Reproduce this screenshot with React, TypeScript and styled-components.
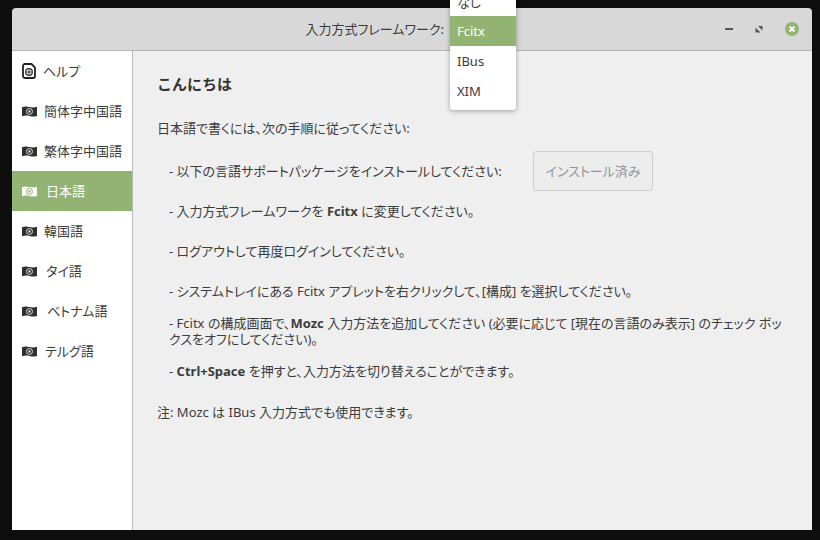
import React from "react";
import styled, { createGlobalStyle } from "styled-components";

const Global = createGlobalStyle`
  html, body { margin: 0; padding: 0; width: 820px; height: 540px; overflow: hidden; background: #0e0e0e; }
  #root { width: 820px; height: 540px; }
`;

const Desktop = styled.div`
  width: 820px;
  height: 540px;
  padding: 8px 8px 10px 12px;
  box-sizing: border-box;
  background: #0e0e0e;
  font-family: "Noto Sans", "Noto Sans CJK JP", sans-serif;
  font-feature-settings: "palt";
  font-size: 13px;
  color: #3c3c3c;
`;

const Win = styled.div`
  position: relative;
  width: 100%;
  height: 100%;
  display: flex;
  flex-direction: column;
`;

const TitleBar = styled.header`
  height: 42px;
  flex: none;
  display: flex;
  align-items: center;
  background: #d8d8d8;
  border-bottom: 1px solid #b6b6b6;
  border-radius: 4px 4px 0 0;
`;

const TitleText = styled.div`
  width: 432px;
  flex: none;
  margin-bottom: 2px;
  text-align: right;
  font-size: 13px;
  color: #3a3a3a;
`;

const WindowButtons = styled.div`
  margin-left: auto;
  display: flex;
  align-items: center;
  gap: 22px;
  padding-right: 13px;
`;

const Body = styled.div`
  flex: 1;
  display: flex;
  min-height: 0;
`;

const Sidebar = styled.nav`
  width: 120px;
  flex: none;
  background: #fff;
  border-right: 1px solid #b9b9b9;
`;

const Item = styled.div<{ $active?: boolean }>`
  height: 40px;
  display: flex;
  align-items: center;
  padding-left: 10px;
  background: ${(p) => (p.$active ? "#92b372" : "transparent")};
  color: ${(p) => (p.$active ? "#fff" : "#3c3c3c")};
  svg { flex: none; }
`;

const ItemLabel = styled.span<{ $pad: number }>`
  margin: 0 0 2px ${(p) => p.$pad}px;
`;

const Main = styled.main`
  flex: 1;
  background: #efefef;
  padding: 22px 20px 0 24px;
  min-width: 0;
`;

const Heading = styled.h1`
  margin: 0 0 25px;
  font-size: 15px;
  font-weight: 700;
  font-feature-settings: normal;
  line-height: 22px;
  color: #333;
`;

const Para = styled.p`
  margin: 0;
  font-size: 13px;
  line-height: 16px;
  color: #3c3c3c;
  b { font-weight: 700; }
`;

const Steps = styled.div`
  margin-top: 15px;
  padding-left: 12px;
  display: flex;
  flex-direction: column;
`;

const Step = styled.div`
  min-height: 40px;
  display: flex;
  align-items: center;
`;

const StepLabel = styled.span`
  margin-bottom: 2px;
`;

const InstallLabel = styled(StepLabel)`
  width: 364px;
  flex: none;
`;

const InstallButton = styled.button`
  width: 120px;
  height: 40px;
  border: 1px solid #cfcfcf;
  border-radius: 3px;
  background: #ececec;
  color: #949494;
  font: inherit;
  padding: 0 0 2px;
`;

const Note = styled(Para)`
  margin-top: 13px;
`;

const Menu = styled.div`
  position: absolute;
  left: 438px;
  top: -22px;
  width: 66px;
  padding-bottom: 4px;
  background: #fff;
  border-radius: 0 0 3px 3px;
  box-shadow: 0 1px 5px rgba(0, 0, 0, 0.35);
  font-size: 13px;
`;

const MenuItem = styled.div<{ $active?: boolean }>`
  height: 30px;
  padding-left: 7px;
  display: flex;
  align-items: center;
  background: ${(p) => (p.$active ? "#92b372" : "transparent")};
  color: ${(p) => (p.$active ? "#fff" : "#3c3c3c")};
`;

const Flag = ({ color, hole }: { color: string; hole: string }) => (
  <svg width="15" height="11" viewBox="0 0 15 11">
    <path d="M0 1.2C2.5.2 4.500.4 7.500 1S12.500 1.500 15 .8V10C12.500 10.800 10.500 10.600 7.500 10S2.500 9.500 0 10.200Z" fill={color} />
    <circle cx="7.5" cy="5.500" r="3" fill="none" stroke={hole} strokeWidth="1" />
    <circle cx="7.5" cy="5.500" r="1.200" fill={hole} />
  </svg>
);

const HelpIcon = () => (
  <svg width="14" height="16" viewBox="0 0 14 16">
    <path d="M3 1h6.500L13 4.500V13a2 2 0 0 1-2 2H3a2 2 0 0 1-2-2V3a2 2 0 0 1 2-2Z" fill="#fff" stroke="#222" strokeWidth="1.800" />
    <circle cx="7" cy="9" r="3.300" fill="none" stroke="#2c2c2c" strokeWidth="1.300" />
    <path d="M7 6.500v5M4.500 9h5" stroke="#2c2c2c" strokeWidth="1" />
  </svg>
);

const MinIcon = () => (
  <svg width="8" height="8" viewBox="0 0 8 8"><rect x="0" y="3" width="8" height="2" fill="#555" /></svg>
);
const MaxIcon = () => (
  <svg width="8" height="8" viewBox="0 0 8 8"><path d="M3 1h4.500v4.500ZM.5 2.500v5h5Z" fill="#555" /></svg>
);
const CloseIcon = () => (
  <svg width="14" height="14" viewBox="0 0 14 14">
    <circle cx="7" cy="7" r="7" fill="#92b372" />
    <path d="M4.500 4.500l5 5M9.500 4.500l-5 5" stroke="#fff" strokeWidth="2" />
  </svg>
);

const langs = [
  { name: "簡体字中国語", pad: 7 },
  { name: "繁体字中国語", pad: 7 },
  { name: "日本語", pad: 9, active: true },
  { name: "韓国語", pad: 7 },
  { name: "タイ語", pad: 9 },
  { name: "ベトナム語", pad: 10 },
  { name: "テルグ語", pad: 8 },
];

export default function App() {
  return (
    <Desktop>
      <Global />
      <Win>
        <TitleBar>
          <TitleText>入力方式フレームワーク:</TitleText>
          <WindowButtons>
            <MinIcon />
            <MaxIcon />
            <CloseIcon />
          </WindowButtons>
        </TitleBar>
        <Body>
          <Sidebar>
            <Item>
              <HelpIcon />
              <ItemLabel $pad={7}>ヘルプ</ItemLabel>
            </Item>
            {langs.map((l) => (
              <Item key={l.name} $active={l.active}>
                <Flag color={l.active ? "#fff" : "#2e2e2e"} hole={l.active ? "#92b372" : "#ddd"} />
                <ItemLabel $pad={l.pad}>{l.name}</ItemLabel>
              </Item>
            ))}
          </Sidebar>
          <Main>
            <Heading>こんにちは</Heading>
            <Para>日本語で書くには、次の手順に従ってください:</Para>
            <Steps>
              <Step>
                <InstallLabel>- 以下の言語サポートパッケージをインストールしてください:</InstallLabel>
                <InstallButton disabled>インストール済み</InstallButton>
              </Step>
              <Step><StepLabel>- 入力方式フレームワークを <b>Fcitx</b> に変更してください。</StepLabel></Step>
              <Step><StepLabel>- ログアウトして再度ログインしてください。</StepLabel></Step>
              <Step><StepLabel>- システムトレイにある Fcitx アプレットを右クリックして、[構成] を選択してください。</StepLabel></Step>
              <Step><Para>- Fcitx の構成画面で、<b>Mozc</b> 入力方法を追加してください (必要に応じて [現在の言語のみ表示] のチェック ボックスをオフにしてください)。</Para></Step>
              <Step><StepLabel>- <b>Ctrl+Space</b> を押すと、入力方法を切り替えることができます。</StepLabel></Step>
            </Steps>
            <Note>注: Mozc は IBus 入力方式でも使用できます。</Note>
          </Main>
        </Body>
        <Menu>
          <MenuItem>なし</MenuItem>
          <MenuItem $active>Fcitx</MenuItem>
          <MenuItem>IBus</MenuItem>
          <MenuItem>XIM</MenuItem>
        </Menu>
      </Win>
    </Desktop>
  );
}
